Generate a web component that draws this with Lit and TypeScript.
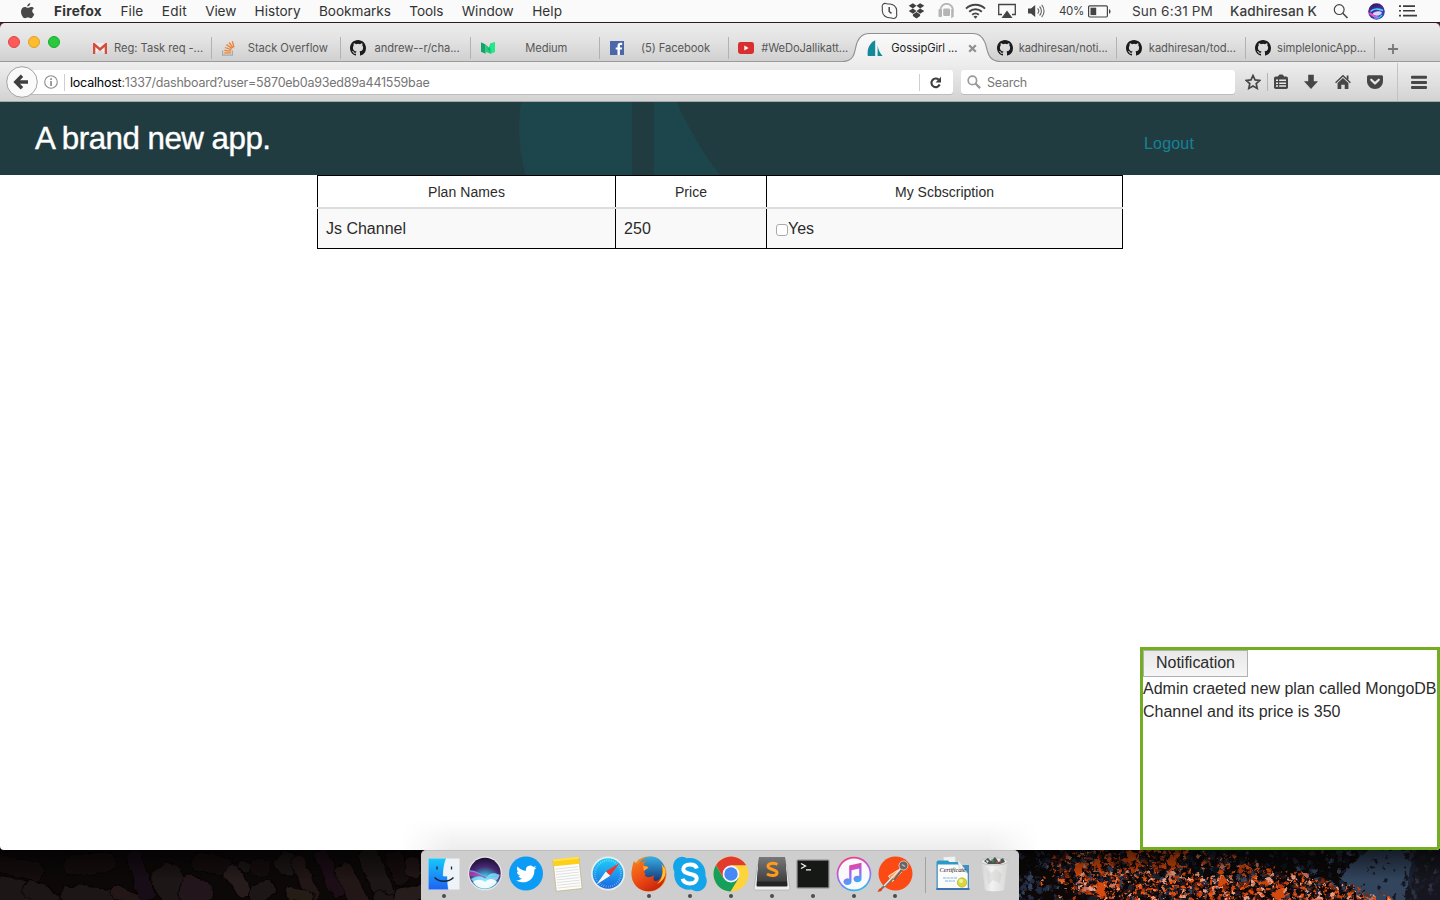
import { LitElement, html, svg, css, TemplateResult } from "lit";
import { customElement, property } from "lit/decorators.js";

/** A single line of text whose tracking adapts so that it fills a given width. */
@customElement("fit-text")
class FitText extends LitElement {
  @property({ type: Number }) w = 0;
  static styles = css`
    :host { display: inline-block; white-space: nowrap; }
    span { display: inline-block; white-space: pre; }
  `;
  render() {
    return html`<span><slot></slot></span>`;
  }
  firstUpdated() {
    const n = (this.textContent || "").length;
    const span = this.renderRoot.querySelector("span") as HTMLElement;
    const natural = span.getBoundingClientRect().width;
    if (n > 1 && this.w) {
      this.style.letterSpacing = ((this.w - natural) / n).toFixed(3) + "px";
    }
  }
}

const fit = (text: string, w: number) => html`<fit-text .w=${w}>${text}</fit-text>`;

const OCTOCAT = svg`<path fill="#1b1b1b" fill-rule="evenodd" d="M8 0C3.58 0 0 3.58 0 8c0 3.54 2.29 6.53 5.47 7.59.4.07.55-.17.55-.38 0-.19-.01-.82-.01-1.49-2.01.37-2.53-.49-2.69-.94-.09-.23-.48-.94-.82-1.13-.28-.15-.68-.52-.01-.53.63-.01 1.08.58 1.23.82.72 1.21 1.87.87 2.33.66.07-.52.28-.87.51-1.07-1.78-.2-3.64-.89-3.64-3.95 0-.87.31-1.59.82-2.15-.08-.2-.36-1.02.08-2.12 0 0 .67-.21 2.2.82a7.6 7.6 0 0 1 4 0c1.53-1.04 2.2-.82 2.2-.82.44 1.1.16 1.92.08 2.12.51.56.82 1.27.82 2.15 0 3.07-1.87 3.75-3.65 3.95.29.25.54.73.54 1.48 0 1.07-.01 1.93-.01 2.2 0 .21.15.46.55.38A8 8 0 0 0 16 8c0-4.42-3.58-8-8-8z"/>`;

const FAVICONS: Record<string, TemplateResult> = {
  gmail: svg`<rect x="1" y="3" width="14" height="11" rx="1" fill="#eee"/><path d="M3 14 8 9l5 5z" fill="#dcdcdc"/><path d="M1 14V3h1.500L8 7.700 13.500 3H15v11h-2.300V7L8 11 3.300 7v7z" fill="#d64c3d"/>`,
  stack: svg`<path d="M1.600 10.500v4.600h9.800v-4.600" fill="none" stroke="#a9a9a9" stroke-width="1.200"/><g stroke="#ef8236" stroke-width="1.300"><path d="M3.200 12.800h6.600M3.300 10.400l6.700.8M3.900 7.500l6.500 2.200M5.400 4.600l5.700 3.800M8.100 2.500l4 5.300M11.300 1.200l1.700 6"/></g>`,
  github: OCTOCAT,
  medium: svg`<path d="M1 2.300 5.600 4.500v9.300L1 11.800z" fill="#15a36a"/><path d="M5.600 4.500 8.400 9l2-5.600L15 2.200v9.600l-4.600 2-4.800-2z" fill="#1fd07b"/><path d="M10.400 3.400 15 2.300v9.500l-4.600 2z" fill="#22e887"/><path d="M5.600 4.500l4.800 9.300V9z" fill="#15b56c"/>`,
  facebook: svg`<rect x="1" y="1" width="14" height="14" fill="#4b66a9"/><path d="M8.500 15V9.600H6.700V7.400h1.800V5.800c0-2 1.200-3 3-3h1.700v2.100H12c-.9 0-1.100.4-1.100 1.100v1.400h2.200l-.3 2.200h-1.900V15z" fill="#fff"/>`,
  youtube: svg`<rect x="0" y="2" width="16" height="12" rx="2.400" fill="#d9302f"/><path d="M6.300 5.600v4.800L10.600 8z" fill="#fff"/>`,
  sails: svg`<path d="M8.200.3V16H.8C-.2 9 2.400 3.200 8.200.3z" fill="#128a9c"/><path d="M10.600 5.500c.6 4 2.400 7.500 5 10.500h-5z" fill="#128a9c"/>`,
};

interface Tab { icon: string; title: string; w: number; active?: boolean; }
const TABS: Tab[] = [
  { icon: "gmail", title: "Reg: Task req -...", w: 89 },
  { icon: "stack", title: "Stack Overflow", w: 80 },
  { icon: "github", title: "andrew--r/cha...", w: 85 },
  { icon: "medium", title: "Medium", w: 42 },
  { icon: "facebook", title: "(5) Facebook", w: 69 },
  { icon: "youtube", title: "#WeDoJallikatt...", w: 87 },
  { icon: "sails", title: "GossipGirl ...", w: 66, active: true },
  { icon: "github", title: "kadhiresan/noti...", w: 89 },
  { icon: "github", title: "kadhiresan/tod...", w: 87 },
  { icon: "github", title: "simpleIonicApp...", w: 89 },
];

const MENUS: [string, number][] = [
  ["Firefox", 48], ["File", 23], ["Edit", 25], ["View", 31], ["History", 46],
  ["Bookmarks", 72], ["Tools", 34], ["Window", 52], ["Help", 30],
];

@customElement("mac-menubar")
class MacMenubar extends LitElement {
  static styles = css`
    :host { display: flex; align-items: center; height: 22px; background: #fafafa; border-bottom: 1px solid #2c1a20;
      font: 500 13.6px/22px Inter, Roboto, sans-serif; color: #3c3c3c; padding-left: 20px; }
    svg { display: block; }
    .apple { width: 15px; height: 18px; margin-right: 19px; position: relative; top: -.5px; }
    .menus { display: flex; gap: 18.4px; flex: 1; font-weight: 400; color: #333; }
    .menus > :first-child { font-weight: 700; }
    .status { display: grid; grid-template-columns: 27px 30px 27px 33px 30px 31px 29px 44px 98px 103px 35px 31px 41px; align-items: center; height: 22px; }
    .pct { font-size: 11.5px; font-weight: 400; }
    .clock { font-weight: 400; }
  `;
  render() {
    return html`
      <svg class="apple" viewBox="0 0 15 18"><path fill="#484848" d="M10.3 1c.1 1.900-1.400 3.500-3 3.500C7.100 2.700 8.600 1.200 10.300 1zM13.900 6.300c-2.400 1.500-2 4.600.4 5.600-.6 1.800-2 4.300-3.500 4.300-1.200 0-1.500-.7-2.900-.7s-1.800.7-2.900.7C3 16.200 1 12.600 1 9.700c0-3 1.900-4.700 3.800-4.700 1.300 0 2.100.8 3.200.8 1 0 1.900-.8 3.400-.8 1 0 2 .5 2.500 1.300z"/></svg>
      <div class="menus">${MENUS.map(([t, w]) => fit(t, w))}</div>
      <div class="status">
        <svg width="17" height="18" viewBox="0 0 17 18" fill="none" stroke="#444" stroke-width="1.1"><path d="M5 1.500C3 .8.8 2.500 1.200 5c.4 1 0 2 .1 4 .3 4.200 3.700 7 7.500 6.700 1.200 0 2 .8 3.500.8 2.400 0 4-2.300 3.400-4.500-.3-1.200.1-2 0-3.500C15.400 4.500 12 1.800 8.300 2 7 2.200 6.200 1.800 5 1.500z"/><path d="M8.200 5v4.500l2.300 1.800" stroke-width="1.500"/></svg>
        <svg width="17" height="16" viewBox="0 0 17 16" fill="#3f3f3f"><path d="M4.900.2 8.500 2.700 4.900 5.400.7 2.700zM12.100.2l4.200 2.500-4.200 2.700L8.500 2.700zM.7 8l4.200-2.600L8.500 8l-3.600 2.700zM16.300 8l-4.200-2.600L8.500 8l3.600 2.700zM4.900 11.600l3.600-2.500 3.600 2.500v1.400l-3.600 2.600-3.600-2.600z"/></svg>
        <svg width="17" height="16" viewBox="0 0 17 16" fill="#b5b5b5"><path d="M2.500 6A6 6 0 0 1 14.800 8v6" fill="none" stroke="#b5b5b5" stroke-width="1.800"/><rect x=".5" y="6" width="3.500" height="8" rx="1"/><rect x="5.200" y="5.500" width="6.800" height="7.500" rx="1.200"/><path d="M13.200 6h1.200v9h-1.200z"/></svg>
        <svg width="21" height="16" viewBox="0 0 21 16" fill="none" stroke="#444" stroke-width="1.9"><path d="M1 5.600a13.600 13.600 0 0 1 19 0M4.200 8.800a9 9 0 0 1 12.600 0M7.200 11.700a4.900 4.900 0 0 1 6.600 0"/><path d="M10.500 15.800 8.500 13.600a2.900 2.900 0 0 1 4 0z" fill="#444" stroke="none"/></svg>
        <svg width="18" height="16" viewBox="0 0 18 16"><path d="M4 11.500H.7v-10h16.600v10H14" fill="none" stroke="#444" stroke-width="1.300"/><path d="m9 7.500 5.500 7.500h-11z" fill="#444"/></svg>
        <svg width="17" height="14" viewBox="0 0 17 14"><path d="M0 4.500h3L7.200 1v12L3 9.500H0z" fill="#444"/><path d="M9.600 4.300a4 4 0 0 1 0 5.400M11.600 2.500a6.500 6.500 0 0 1 0 9M13.700.9a9 9 0 0 1 0 12.200" fill="none" stroke="#666" stroke-width="1.100"/></svg>
        <span class="pct">${fit("40%", 25)}</span>
        <svg width="23" height="13" viewBox="0 0 23 13"><rect x=".6" y=".8" width="18.800" height="11.200" rx="1.200" fill="none" stroke="#444" stroke-width="1.200"/><rect x="2.500" y="2.700" width="5.700" height="7.400" fill="#444"/><path d="M21 4.200c2 .3 2 4.100 0 4.400z" fill="#444"/></svg>
        <span class="clock">${fit("Sun 6:31 PM", 81)}</span>
        ${fit("Kadhiresan K", 87)}
        <svg width="16" height="16" viewBox="0 0 16 16" fill="none" stroke="#444" stroke-width="1.200"><circle cx="6.200" cy="6.600" r="4.900"/><path d="m9.800 10.200 4.700 4.800" stroke-width="1.500"/></svg>
        <svg width="17" height="17" viewBox="0 0 17 17"><defs><linearGradient id="sm" x1="0" y1="0" x2=".3" y2="1"><stop offset="0" stop-color="#241450"/><stop offset=".45" stop-color="#4a2a9c"/><stop offset="1" stop-color="#2b4cb0"/></linearGradient></defs><circle cx="8.500" cy="8.500" r="8.300" fill="url(#sm)"/><path d="M2.500 8.500c3-3 6-3.500 12.500-1" stroke="#42d7f2" stroke-width="1.600" fill="none"/><path d="M4.500 11c2-3.500 7.500-3.500 9.500-1.500-.5 3-6.500 4.500-9.500 1.500z" fill="#d9d4ff"/><path d="M1.500 10c2 1.500 4 4.500 9 4" stroke="#ff4fc3" stroke-width="1.800" fill="none"/><path d="M6 14.800c3 .8 6 0 8-3" stroke="#35b9ff" stroke-width="1.300" fill="none"/></svg>
        <svg width="19" height="14" viewBox="0 0 19 14" fill="#3d3d3d"><path d="M0 1.200h2v1.700H0zM4 1.200h12v1.700H4zM0 5.900h2v1.700H0zM4 5.900h12v1.700H4zM0 10.700h2v1.700H0zM4 10.700h14v1.700H4z"/></svg>
      </div>`;
  }
}

@customElement("browser-chrome")
class BrowserChrome extends LitElement {
  static styles = css`
    :host { display: block; height: 79px; font-family: Inter, Roboto, sans-serif; background: #5b1f2b; }
    svg { display: block; flex: none; }
    .strip { display: flex; height: 38px; background: linear-gradient(#ebebeb, #e4e4e4 40%, #d0d0d0); border-bottom: 1px solid #9a9a9a;
      border-radius: 5px 5px 0 0; box-sizing: content-box; }
    .lights { display: flex; gap: 8px; width: 74px; padding: 13px 0 0 8px; }
    .light { width: 12px; height: 12px; border-radius: 50%; box-sizing: border-box; border: 1px solid #e2463f; background: #fc5b57; }
    .light.min { border-color: #e0a028; background: #fdbc2e; }
    .light.max { border-color: #1aab29; background: #27c93f; }
    .tab { display: flex; align-items: center; width: 129.23px; height: 29px; margin-top: 10px; box-sizing: border-box; padding: 1px 8px 0 10px;
      position: relative; font-size: 11.2px; color: #585858; }
    .tab::after { content: ""; position: absolute; right: -1px; top: 4px; width: 1px; height: 22px; background: #b2b2b2; }
    .tab.active::after, .tab.before::after { display: none; }
    .tab.active { color: #1e1e1e; }
    .title { flex: 1; text-align: center; margin-left: 6px; white-space: nowrap; position: relative; }
    .active .title { text-align: left; margin-left: 8px; }
    .shape { position: absolute; left: -14px; top: -1px; }
    .fav, .close { position: relative; }
    .close { margin-right: 2px; }
    .plus { margin: 20px 0 0 13px; }
    .bar { display: flex; align-items: center; height: 40px; box-sizing: border-box; background: linear-gradient(#eeeeee, #d3d3d3);
      border-bottom: 1px solid #a8a8a8; padding: 1px 0 0 6px; }
    .back { position: relative; z-index: 1; margin-right: -16px; }
    .url { display: flex; flex: none; align-items: center; width: 931px; height: 24px; background: #fff; border-radius: 0 3px 3px 0; box-shadow: 0 1px 0 #bcbcbc;
      box-sizing: border-box; padding: 0 11px 0 22px; font-size: 12.5px; color: #757575; }
    .sep { width: 1px; height: 17px; background: #cfcfcf; flex: none; }
    .url .sep.a { margin: 0 5px 0 6px; }
    .url .sep.b { margin: 0 9px 0 auto; }
    .host { color: #000; }
    .search { display: flex; flex: none; align-items: center; width: 274px; height: 24px; margin-left: 8px; background: #fff; border-radius: 3px; box-shadow: 0 1px 0 #bcbcbc;
      box-sizing: border-box; padding-left: 6px; gap: 6px; font-size: 12.5px; color: #777; }
    .tools { display: grid; flex: none; grid-template-columns: 22px 7px 30px 31px 32px 30px 14px 29px; align-items: center; margin-left: 10px; height: 38px; }
    .tall { width: 1px; height: 38px; background: #c3c3c3; }
    .dark { background: #b4b4b4; height: 18px; }
  `;
  tab(t: Tab, i: number) {
    const cls = "tab" + (t.active ? " active" : "") + (TABS[i + 1]?.active ? " before" : "");
    return html`<div class=${cls}>
      ${t.active ? html`<svg class="shape" width="160" height="30" viewBox="0 0 160 30">
        <defs><linearGradient id="tg" x1="0" y1="0" x2="0" y2="1"><stop offset="0" stop-color="#fafafa"/><stop offset="1" stop-color="#eeeeee"/></linearGradient></defs>
        <path d="M0 29.500C14 29 11 16 14.500 9.500 17 4 20 1.500 26 1.500H130c6 0 9 2.500 11.500 8C145 16 143 29 157 29.500V30H0z" fill="url(#tg)"/>
        <path d="M0 29.500C14 29 11 16 14.500 9.500 17 4 20 1.500 26 1.500H130c6 0 9 2.500 11.500 8C145 16 143 29 157 29.500" fill="none" stroke="#8f8f8f" stroke-width="1.100"/></svg>` : ""}
      <svg class="fav" width="16" height="16" viewBox="0 0 16 16">${FAVICONS[t.icon]}</svg>
      <span class="title">${fit(t.title, t.w)}</span>
      ${t.active ? html`<svg class="close" width="9" height="9" viewBox="0 0 9 9"><path d="m1.200 1.200 6.600 6.600m0-6.600L1.200 7.800" stroke="#909090" stroke-width="2.200"/></svg>` : ""}
    </div>`;
  }
  render() {
    return html`
      <div class="strip">
        <div class="lights"><i class="light"></i><i class="light min"></i><i class="light max"></i></div>
        ${TABS.map((t, i) => this.tab(t, i))}
        <svg class="plus" width="12" height="12" viewBox="0 0 12 12"><path d="M6 1v10M1 6h10" stroke="#777" stroke-width="1.800"/></svg>
      </div>
      <div class="bar">
        <svg class="back" width="32" height="32" viewBox="0 0 32 32"><circle cx="16" cy="16" r="15.300" fill="#fafafa" stroke="#a3a3a3"/><path d="M22 16H10M16 9.800 9.800 16l6.200 6.200" fill="none" stroke="#3f3f3f" stroke-width="3.400"/></svg>
        <div class="url">
          <svg width="14" height="14" viewBox="0 0 14 14"><circle cx="7" cy="7" r="6.300" fill="none" stroke="#8b8b8b" stroke-width="1.100"/><path d="M6.200 3.200h1.700v1.700H6.200zM6.200 6h1.700v5H6.200z" fill="#8b8b8b"/></svg>
          <i class="sep a"></i>
          <span class="host">${fit("localhost", 51.5)}</span>${fit(":1337/dashboard?user=5870eb0a93ed89a441559bae", 308)}
          <i class="sep b"></i>
          <svg width="13" height="13" viewBox="0 0 13 13"><path d="M9.600 3.600A4.300 4.300 0 1 0 10.700 8.500" fill="none" stroke="#404040" stroke-width="2.100"/><path d="M12 .8v5.700H6.600z" fill="#404040"/></svg>
        </div>
        <div class="search">
          <svg width="14" height="14" viewBox="0 0 14 14" fill="none" stroke="#9a9a9a"><circle cx="5.400" cy="5.400" r="4.200" stroke-width="1.700"/><path d="m8.500 8.500 4.600 4.600" stroke-width="2.300"/></svg>
          ${fit("Search", 40)}
        </div>
        <div class="tools">
          <svg width="16" height="16" viewBox="0 0 16 16"><path d="m8 1.500 2 4.400 4.800.5-3.600 3.200 1 4.800L8 12l-4.200 2.400 1-4.800L1.200 6.400 6 5.900z" fill="none" stroke="#464646" stroke-width="1.700"/></svg>
          <i class="sep dark"></i>
          <svg width="14" height="16" viewBox="0 0 14 16"><rect x="0" y="2.500" width="14" height="12.500" rx="1.800" fill="#464646"/><path d="M4 3V2.200L5.500.5h3L10 2.200V3z" fill="#464646"/><path d="M2 5.500h2V7H2zm3.200 0H12V7H5.200zM2 8.400h2v1.500H2zm3.200 0H12v1.500H5.200zM2 11.300h2v1.500H2zm3.200 0H12v1.500H5.200z" fill="#e8e8e8"/></svg>
          <svg width="14" height="16" viewBox="0 0 14 16"><path d="M4.200.8h5.600v6.400H14L7 15 0 7.200h4.200z" fill="#464646"/></svg>
          <svg width="16" height="16" viewBox="0 0 16 16" fill="none" stroke="#464646"><path d="M.6 8.800 8 1.700l7.400 7.100" stroke-width="1.400"/><path d="M12.600 1.500v4" stroke-width="1.800"/><path d="m8 4 5.400 5.100V15H9.700v-4.300H6.300V15H2.600V9.100z" fill="#464646" stroke="none"/></svg>
          <svg width="16" height="16" viewBox="0 0 16 16"><path d="M1.500 1.200h13c.8 0 1.500.7 1.500 1.500V7c0 4.500-3.600 8-8 8S0 11.500 0 7V2.700c0-.8.7-1.500 1.500-1.500z" fill="#464646"/><path d="m4.200 5.700 3.800 3.700 3.800-3.700" fill="none" stroke="#e6e6e6" stroke-width="2.200" stroke-linecap="round" stroke-linejoin="round"/></svg>
          <i class="tall"></i>
          <svg width="16" height="15" viewBox="0 0 16 15" fill="#464646"><rect y=".8" width="16" height="3" rx="1"/><rect y="5.900" width="16" height="3" rx="1"/><rect y="11" width="16" height="3" rx="1"/></svg>
        </div>
      </div>`;
  }
}

@customElement("plan-page")
class PlanPage extends LitElement {
  static styles = css`
    :host { display: block; height: 748px; background: #fff; position: relative; font: 16px/23px "Liberation Sans", Arial, sans-serif; color: #2b2b2b; overflow: hidden; border-radius: 0 0 4px 4px; }
    header { display: flex; height: 73px; background: #213c41; position: relative; }
    .mark { position: absolute; left: 510px; top: 0; }
    h1 { margin: 18px 0 0 35px; font-size: 31.3px; line-height: 37px; font-weight: 400; color: #fff; width: 1109px; -webkit-text-stroke: .4px #fff; }
    .logout { margin-top: 30px; color: #168297; }
    .plans { display: grid; grid-template-columns: 297px 150px 355px; width: 806px; margin: 0 auto 0 317px; box-sizing: border-box; column-gap: 1px; padding: 1px; background: #000; }
    .th { background: #fff; text-align: center; font-size: 14px; height: 31px; line-height: 32px; }
    .rule { grid-column: 1 / -1; height: 2px; margin: 0 -1px; background: #ddd; }
    .td { background: #f9f9f9; height: 39px; line-height: 39px; padding-left: 8px; }
    .td.check { display: flex; align-items: center; padding-left: 9px; }
    .box { width: 12px; height: 12px; box-sizing: border-box; background: #fff; border: 1px solid #aaa; border-radius: 3px; margin-top: 3px; }
    .shade { position: absolute; left: 401px; bottom: 0; width: 638px; height: 30px; background: linear-gradient(rgba(0,0,0,0), rgba(0,0,0,.07));
      -webkit-mask: linear-gradient(90deg, transparent, #000 8%, #000 92%, transparent); mask: linear-gradient(90deg, transparent, #000 8%, #000 92%, transparent); }
    .note { position: absolute; right: 0; bottom: 0; width: 300px; height: 203px; box-sizing: border-box; border: 3px solid #73ad21; background: #fff; white-space: nowrap; }
    .btn { display: block; width: 105px; height: 27px; box-sizing: border-box; border: 1px solid #b0b0b0; background: linear-gradient(#e8e8e8, #f6f6f6); font: inherit; color: inherit; line-height: 23px; text-align: center; padding: 0 0 2px; }
    .line { height: 23px; display: block; }
  `;
  render() {
    return html`
      <header>
        <svg class="mark" width="220" height="73" viewBox="0 0 220 73" fill="#1c464c"><path d="M11 0C8 20 8.500 48 15.500 73H122V0zM144 0h22.500c12 26 26 51 43.500 73h-66z"/></svg>
        <h1>${fit("A brand new app.", 235.5)}</h1>
        <span class="logout">${fit("Logout", 50)}</span>
      </header>
      <div class="plans">
        <div class="th">${fit("Plan Names", 77)}</div><div class="th">${fit("Price", 32)}</div><div class="th">${fit("My Scbscription", 99)}</div>
        <div class="rule"></div>
        <div class="td">${fit("Js Channel", 80)}</div><div class="td">${fit("250", 27)}</div>
        <div class="td check"><i class="box"></i>${fit("Yes", 26)}</div>
      </div>
      <div class="shade"></div>
      <div class="note">
        <button class="btn">${fit("Notification", 79)}</button>
        <span class="line">${fit("Admin craeted new plan called MongoDB", 293.5)}</span>
        <span class="line">${fit("Channel and its price is 350", 197.5)}</span>
      </div>`;
  }
}

const APPS: { dot?: boolean; art: TemplateResult }[] = [
  { dot: true, art: svg`<defs><linearGradient id="f1" x1="0" y1="0" x2="0" y2="1"><stop offset="0" stop-color="#17c8fb"/><stop offset="1" stop-color="#1e62f2"/></linearGradient></defs><rect x="2.500" y="2.500" width="31" height="31" fill="#eef3f8"/><path d="M2.500 2.500h17.800c-2 5-3 11-3 17.500h4.200c0 5 .4 9 1 13.500h-20z" fill="url(#f1)"/><path d="M20.300 2.500c-2 5-3 11-3 17.500h4.200c0 5 .4 9 1 13.500" fill="none" stroke="#fff" stroke-width=".6"/><path d="M11 10.500v3M25.500 10.500v3" stroke="#10263e" stroke-width="1.300"/><path d="M8.500 21.500c5 5 14 5 19 0" fill="none" stroke="#10263e" stroke-width="1.400"/>` },
  { art: svg`<defs><radialGradient id="s1" cx=".5" cy=".8" r=".8"><stop offset="0" stop-color="#8ef4ff"/><stop offset=".35" stop-color="#36a8c9"/><stop offset=".65" stop-color="#472a72"/><stop offset="1" stop-color="#1c0d33"/></radialGradient></defs><circle cx="18" cy="17.500" r="17" fill="#e9e4ea"/><circle cx="18" cy="17.500" r="15.700" fill="url(#s1)"/><path d="M2.800 14c5 0 10 3 14 6s10 3 16.500-2C31 26 24 25 20 23 13 20 8 21 2.800 20z" fill="#c43cb6" opacity=".7"/><path d="M4 23c6-3 10-4 14 0 4-6 9-7 14.500-4-1.500 6-7 9-13 9-7 0-13-1-15.500-5z" fill="#8eeeff" opacity=".75"/><path d="M6 26c3-3 8-3 12 0 4-4 8-4 12 0-5 8-19 9-24 0z" fill="#fff" opacity=".9"/><path d="M3 15c9 0 15 10 29 4" stroke="#4fc8ff" fill="none" opacity=".8"/>` },
  { art: svg`<circle cx="18" cy="17.500" r="17" fill="#0c9cf5"/><path d="M28.500 11.600c-.8.4-1.500.6-2.400.7.9-.5 1.500-1.300 1.800-2.300-.8.500-1.700.8-2.600 1a4.200 4.200 0 0 0-7.200 3.800c-3.500-.2-6.500-1.800-8.600-4.400-1.200 2-.5 4.400 1.300 5.600-.7 0-1.300-.2-1.900-.5 0 2 1.500 3.700 3.400 4.100-.6.200-1.200.2-1.900.1.500 1.600 2 2.800 3.900 2.900A8.400 8.400 0 0 1 8 24.300c8.500 5 18.800.3 18.400-10.600.8-.6 1.500-1.300 2.100-2.100z" fill="#fff"/>` },
  { art: svg`<g transform="rotate(-6 18 18)"><rect x="5.500" y="3" width="26" height="31" fill="#fdfdfb" stroke="#b9a86a" stroke-width=".6"/><rect x="5.500" y="2" width="26" height="7" fill="#fdd017"/><rect x="5.500" y="2" width="26" height="2" fill="#ffe14d"/><path d="M7 12h23M7 14.700h23M7 17.400h23M7 20.100h23M7 22.800h23M7 25.500h23M7 28.200h23M7 31h23" stroke="#d5d5d8" stroke-width=".7"/></g>` },
  { art: svg`<defs><linearGradient id="sa" x1="0" y1="0" x2="0" y2="1"><stop offset="0" stop-color="#1fd0f8"/><stop offset="1" stop-color="#1a66e0"/></linearGradient></defs><circle cx="18" cy="17.500" r="17" fill="#eaeef0"/><circle cx="18" cy="17.500" r="15.300" fill="url(#sa)"/><circle cx="18" cy="17.500" r="13" fill="none" stroke="#fff" stroke-width="2" stroke-dasharray=".5 1.700" opacity=".6"/><path d="m29.500 7-9.300 12.700-4.400-4.300z" fill="#f5332e"/><path d="m6.500 28.500 9.300-13.100 4.400 4.300z" fill="#f6f6f6"/>` },
  { dot: true, art: svg`<defs><linearGradient id="ff" x1="0" y1="0" x2=".7" y2="1"><stop offset="0" stop-color="#f7801c"/><stop offset=".5" stop-color="#ee4f16"/><stop offset="1" stop-color="#c8210a"/></linearGradient><linearGradient id="fb" x1="0" y1="0" x2="0" y2="1"><stop offset="0" stop-color="#38b0e8"/><stop offset="1" stop-color="#112c6e"/></linearGradient></defs><circle cx="18" cy="18" r="17.500" fill="#f08a1e"/><circle cx="20" cy="14" r="13.500" fill="url(#fb)"/><path d="M3 5c1 1.500 2 2.500 3.500 3C9 6.500 11 5 15.500 4.500c-2 1.600-2.600 3.200-2.300 5.200 1.700 0 3.300.4 4.500 1.500-1.700 2.300-4.400 2.500-4.700 5 1.500 1 1.500 2 1 3.500 2.500 2.500 7 1 9.500-.8C20 26 27 27 30 21c1.500-3 1.500-7 .5-10 3 2 4 4.500 4 8C34 29 26 35.300 17.500 35.300 7 35.300.3 27 .6 17.500.7 13 1.500 8.500 3 5z" fill="url(#ff)"/><path d="M30.500 8c2.500 7 1 15-4.500 20 7-3 10-10 7.500-16z" fill="#ffc53a"/><path d="M12 10c2 .2 4 .5 5.300 1.400-1.300 1.800-3.600 2-4.300 3.600z" fill="#ffad30"/>` },
  { dot: true, art: svg`<path d="M10 .7c2 0 3.600.8 5 1.500C26 .8 34.500 9 33.500 20c4 7.500-2 17-10.500 15-1.500-.3-2.500-.8-3.500-1.400C8.500 35 1 26.500 2.300 15.500-1 9 3 1 10 .7z" fill="#12a5e9"/><path d="M24.800 12.500c-.7-2.700-3.500-4-7-4-4 0-6.500 1.900-6.500 4.600 0 6.500 13.400 3.200 13.400 9.400 0 2.900-2.800 4.900-6.700 4.900-3.800 0-6.600-1.500-7.400-4.600" fill="none" stroke="#fff" stroke-width="4"/>` },
  { dot: true, art: svg`<circle cx="18" cy="18" r="17.500" fill="#fdd43b"/><path d="M3 9.200A17.500 17.500 0 0 1 33.200 9.300H18L10.400 22z" fill="#e23b2e"/><path d="M2.900 9.200A17.500 17.500 0 0 0 17.500 35.500L25.600 22.300 10.400 22.300z" fill="#14a05a"/><circle cx="18" cy="18" r="8.400" fill="#f6f6f6"/><circle cx="18" cy="18" r="6.700" fill="#4688f4"/>` },
  { dot: true, art: svg`<defs><linearGradient id="sl" x1="0" y1="0" x2="0" y2="1"><stop offset="0" stop-color="#777"/><stop offset="1" stop-color="#3f3f3f"/></linearGradient></defs><path d="M3.500 9 .2 31.500C0 33 .5 34 2 34h32c1.500 0 2-1 1.800-2.500L32.500 9z" fill="#eeeeee" stroke="#999" stroke-width=".5"/><path d="M5 1.500h26l2.500 27.500c0 1-.5 1.500-1.500 1.500H4c-1 0-1.500-.5-1.500-1.500z" fill="#242424"/><path d="M5 1.500h26l2 24H3z" fill="url(#sl)"/><path d="M23.500 8.500c-4-2-9.500-1.500-9.500 1.800 0 3.800 9 2.600 9 6.400 0 3.300-6 3.500-10 1.300" fill="none" stroke="#ff9a1f" stroke-width="3"/>` },
  { dot: true, art: svg`<rect x="1.500" y="3.500" width="33" height="29" rx="1.500" fill="#8a8a8a"/><rect x="2.700" y="4.700" width="30.600" height="26.600" fill="#161816"/><path d="m6 7.500 4.500 2.500L6 12.500M11 13.800h5" fill="none" stroke="#f3f3f3" stroke-width="1.300"/>` },
  { dot: true, art: svg`<defs><linearGradient id="it" x1=".2" y1="0" x2=".5" y2="1"><stop offset="0" stop-color="#fb3b6f"/><stop offset=".5" stop-color="#b25bf2"/><stop offset="1" stop-color="#29b8f7"/></linearGradient></defs><circle cx="18" cy="18" r="17.300" fill="url(#it)"/><circle cx="18" cy="18" r="15.600" fill="#fafafc"/><path d="M13.200 9.500 25.500 6.700V23a4 3.300 0 1 1-2.300-3v-7.500l-7.700 1.800v11.400a4 3.300 0 1 1-2.300-3z" fill="url(#it)"/>` },
  { dot: true, art: svg`<circle cx="18.500" cy="17.500" r="17" fill="#fb4a14"/><path d="m11.500 20 9.500-6 3.500 2-9 9.500z" fill="#ff9b3e" stroke="#fff" stroke-width=".8"/><path d="M3 33 14 21l2.500 2.500L4.500 34z" fill="#747474"/><path d="M7 30 23.500 12.500" stroke="#e8e8e8" stroke-width="1.500"/><path d="m17 24 8-10.500" stroke="#666" stroke-width="2"/><circle cx="26.500" cy="9.500" r="4.500" fill="#666" stroke="#ddd" stroke-width=".8"/><path d="m25 8.500 3 2" stroke="#bbb" stroke-width="1.500"/><path d="m.5 36 1.500-3 3.500-1.500-1 3.500z" fill="#e83e12"/>` },
];

const FOLDER = svg`<path d="M8.500 8V1l12-.5V8z" fill="#f2f2f2" stroke="#ccc" stroke-width=".4"/><path d="M1.500 6.500C1.500 5.500 2.300 4.500 3.500 4.500H13l1.500 1.500h9v4h-22z" fill="#2a9bc9"/><path d="M1.500 9h32.500v25h-32.500z" fill="#3f8fc4"/><path d="M2.800 8.500h20.200l9.700 9V32H2.800z" fill="#fbfbfa"/><path d="M1.500 32h33V34h-33z" fill="#3e73b0"/><path d="M22.500 2.500 32.700 17.500 24 12z" fill="#efefef" stroke="#bbb" stroke-width=".4"/><path d="M8 22h14M10 25h10" stroke="#7db3e8" stroke-width="1" stroke-dasharray="3 .7"/><circle cx="27" cy="26.500" r="4.700" fill="#d8d937" stroke="#a7a930" stroke-width=".6"/><circle cx="26" cy="25" r="2" fill="#f3f2a0"/>`;
const TRASH = svg`<defs><linearGradient id="tr"><stop offset="0" stop-color="#d2d2d2"/><stop offset=".4" stop-color="#f2f2f2"/><stop offset="1" stop-color="#d6d6d6"/></linearGradient></defs><path d="M5 5h27l-4 29c-2 1.700-17 1.700-19 0z" fill="url(#tr)"/><path d="M10 12l5 5 5-4 6 5-2 9-7-3-5 5z" fill="#bdb9b8" opacity=".28"/><ellipse cx="18.500" cy="5.500" rx="13.500" ry="3.600" fill="#e9e9e9" stroke="#aaa" stroke-width=".6"/><path d="m8 5 4-3 3 3 4-4 3 4 5-3 2 4-5 2H12z" fill="#50544f"/><path d="m10 4 3 1-2 2zM22 3l3 2-3 1z" fill="#eee"/><path d="m15 3 3 1-1 3z" fill="#2f9b6f"/><path d="m20 5 3 1-2 2zm-9-2 2 1z" fill="#c44b3d"/>`;

/** Small deterministic generator so that the scenery is the same on each paint. */
function rng(seed: number) {
  let s = seed;
  return () => ((s = (s * 1664525 + 1013904223) >>> 0) / 4294967296);
}
function shard(r: () => number, x: number, y: number, size: number, fill: string, squash = 1) {
  const pts: string[] = [];
  const n = 5 + Math.floor(r() * 3);
  for (let i = 0; i < n; i++) {
    const a = (i / n) * 6.283 + r() * 0.6;
    const d = size * (0.4 + r() * 0.8);
    pts.push(`${(x + Math.cos(a) * d * squash).toFixed(1)},${(y + Math.sin(a) * d).toFixed(1)}`);
  }
  return svg`<polygon points=${pts.join(" ")} fill=${fill}/>`;
}

/* Boulders of the dark slope: centre x, centre y, half width, half height, tilt, fill. */
const BOULDERS: [number, number, number, number, number, string][] = [
  [15, 17, 28, 9, 12, "#150f10"], [90, 14, 26, 10, -4, "#130e0f"], [8, 44, 24, 16, 8, "#1f1617"], [42, 46, 20, 10, 35, "#1a1518"],
  [92, 46, 32, 9, 4, "#1f1718"], [130, 48, 20, 7, 25, "#231919"], [140, 26, 8, 26, -18, "#191112"], [170, 34, 16, 20, -30, "#1c1314"],
  [195, 42, 18, 14, 30, "#21191b"], [212, 14, 20, 8, 10, "#140d0e"], [238, 32, 8, 18, -32, "#271c1c"], [244, 16, 7, 5, 30, "#1b1415"],
  [260, 17, 10, 9, 0, "#161011"], [262, 42, 14, 8, -35, "#1f1617"], [288, 13, 13, 12, 20, "#1b1314"], [305, 28, 7, 24, -24, "#201616"],
  [300, 46, 14, 7, 10, "#251a19"], [330, 24, 8, 26, -26, "#1a1112"], [352, 36, 9, 24, -28, "#241919"], [376, 24, 10, 28, -24, "#1e1415"],
  [398, 18, 8, 18, -20, "#180f11"], [412, 18, 8, 10, 15, "#231919"], [410, 44, 17, 8, -15, "#261b1a"], [384, 48, 10, 6, 10, "#1f1617"],
];

@customElement("mac-dock")
class MacDock extends LitElement {
  static styles = css`
    :host { display: flex; justify-content: center; height: 50px; position: relative; background: #0c0808; overflow: hidden; }
    .scene { position: absolute; left: 0; top: 0; }
    .dock { position: relative; display: flex; width: 598px; height: 50px; box-sizing: border-box; background: #cecece; border-radius: 5px 5px 0 0; padding-left: 2.5px; border-top: 1px solid #bdbdbd; }
    .slot { width: 41px; display: flex; flex-direction: column; align-items: center; padding-top: 5px; box-sizing: border-box; }
    .slot svg { display: block; overflow: visible; }
    .dot { width: 4px; height: 4px; border-radius: 50%; background: #4c4c4c; margin-top: 2px; }
    .line { width: 1px; height: 36px; background: #a2a2a2; margin: 6px 7px 0 9px; }
    .folder { position: relative; }
    .caption { position: absolute; left: 7px; top: 15px; font: italic 6.5px/8px "Liberation Serif", serif; color: #222; letter-spacing: -.15px; }
  `;
  scenery() {
    const r = rng(77);
    const rocks = BOULDERS.map(([x, y, a, b, t, f]) =>
      svg`<rect x=${x - a} y=${y - b} width=${a * 2} height=${b * 2} rx=${Math.min(a, b) * 0.8} transform="rotate(${t} ${x} ${y})" fill=${f} stroke="#0a0607" stroke-width="1"/>`);
    const out: TemplateResult[] = [];
    const cold = ["#1b2030", "#242d44", "#11131c", "#35435c", "#0e0e14", "#22222f", "#11131c"];
    for (let i = 0; i < 900; i++) out.push(shard(r, 1015 + r() * 430, r() * 54, 1 + r() * 3, cold[Math.floor(r() * 7)]));
    out.push(svg`<path d="M1366 0h50l-6 52h-44l-26-24z" fill="#33445d"/>`);
    const warm = ["#e04a0a", "#e8540e", "#7a2608", "#2a1214", "#c9765c", "#b83a0c", "#181218", "#c8420c", "#f09a78", "#e8a088", "#ee5208"];
    for (let i = 0; i < 2600; i++) {
      const x = 1040 + r() * 350, y = r() * 54;
      const top = x < 1200 ? (x < 1062 ? (1062 - x) * 1.1 : 0) : (x - 1200) * 0.26;
      const edge = y - top + (r() - 0.5) * 10;
      if (edge < 0 || (x < 1100 && y > (x - 1040) * 0.9 + 12 && r() > 0.12)) continue;
      if (x > 1190 && x < 1240 && y < 26 && r() > 0.4) continue;
      const pick = y < 20 ? Math.floor(r() * 8) : Math.floor(r() * 11);
      out.push(shard(r, x, y, 0.7 + r() * r() * 2.8, warm[pick], 1.2));
    }
    const slabs: [number, number][] = [[1078, 18], [1098, 12], [1172, 12], [1222, 30], [1100, 40], [1130, 8], [1278, 44]];
    for (const [x, y] of slabs) out.push(shard(r, x, y, 8, "#d4480c", 0.8));
    for (let i = 0; i < 26; i++) out.push(shard(r, 1360 + r() * 50, r() * 50, 1 + r() * 2.5, "#171923", 0.7));
    out.push(svg`<path d="M1412 0h30v52h-36z" fill="#1a1b27" opacity=".8"/>`);
    for (let i = 0; i < 40; i++) out.push(shard(r, 1406 + r() * 36, r() * 50, 1 + r() * 3.5, i % 3 ? "#13141c" : "#2d3040"));
    return svg`<g filter="url(#roughRock)">${rocks}</g><g filter="url(#rough)">${out}</g>`;
  }
  render() {
    return html`
      <svg class="scene" width="1440" height="50" viewBox="0 0 1440 50">
        <defs>
          <linearGradient id="fade" x1="0" y1="0" x2="0" y2="1"><stop offset="0" stop-color="#000" stop-opacity=".6"/><stop offset=".6" stop-color="#000" stop-opacity="0"/></linearGradient>
          <filter id="rough" filterUnits="userSpaceOnUse" x="1010" y="0" width="430" height="50"><feTurbulence type="fractalNoise" baseFrequency=".16" numOctaves="3" seed="4"/><feDisplacementMap in="SourceGraphic" scale="5" xChannelSelector="R" yChannelSelector="G"/></filter>
          <filter id="roughRock" filterUnits="userSpaceOnUse" x="0" y="0" width="430" height="50"><feTurbulence type="fractalNoise" baseFrequency=".07" numOctaves="3" seed="9"/><feDisplacementMap in="SourceGraphic" scale="8" xChannelSelector="R" yChannelSelector="G"/></filter>
        </defs>
        ${this.scenery()}
        <rect width="1440" height="50" fill="url(#fade)"/>
      </svg>
      <div class="dock">
        ${APPS.map(a => html`<div class="slot"><svg width="36" height="36" viewBox="0 0 36 36">${a.art}</svg>${a.dot ? html`<i class="dot"></i>` : ""}</div>`)}
        <i class="line"></i>
        <div class="slot folder"><svg width="36" height="36" viewBox="0 0 36 36">${FOLDER}</svg><span class="caption">Certificate</span></div>
        <div class="slot"><svg width="36" height="36" viewBox="0 0 36 36">${TRASH}</svg></div>
      </div>`;
  }
}

@customElement("app-root")
class AppRoot extends LitElement {
  static styles = css`
    :host { display: flex; flex-direction: column; width: 1440px; height: 900px; overflow: hidden; background: #000; }
  `;
  render() {
    return html`<mac-menubar></mac-menubar><browser-chrome></browser-chrome><plan-page></plan-page><mac-dock></mac-dock>`;
  }
}
